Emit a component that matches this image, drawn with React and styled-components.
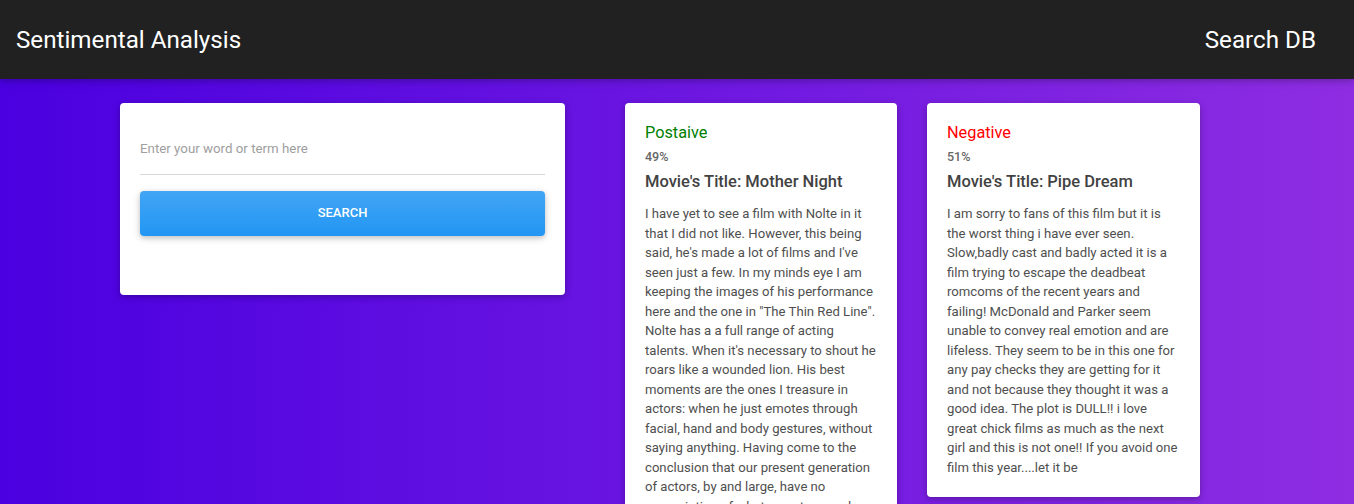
import React, { useState } from "react";
import styled, { createGlobalStyle } from "styled-components";

const GlobalStyle = createGlobalStyle`
  html, body {
    margin: 0;
    padding: 0;
  }
  body {
    font-family: Roboto, "Liberation Sans", sans-serif;
    background: linear-gradient(to right, #4a00e0, #8e2de2);
    min-height: 100vh;
  }
`;

const Page = styled.div`
  min-height: 100vh;
  background: linear-gradient(to right, #4a00e0, #8e2de2);
`;

const NavBar = styled.nav`
  height: 79px;
  background-color: #212121;
  display: flex;
  align-items: center;
  justify-content: space-between;
  padding: 0 38px 0 16px;
  box-sizing: border-box;
  box-shadow: 0 2px 5px 0 rgba(0, 0, 0, 0.16), 0 2px 10px 0 rgba(0, 0, 0, 0.12);
`;

const Brand = styled.span`
  color: #fff;
  font-size: 24.2px;
  font-weight: 400;
`;

const NavLink = styled.a`
  color: #fff;
  font-size: 24.2px;
  text-decoration: none;
  cursor: pointer;
`;

const Main = styled.main`
  display: flex;
  align-items: flex-start;
  padding: 24px 0 0 120px;
`;

const Card = styled.div`
  background: #fff;
  border-radius: 4px;
  box-shadow: 0 2px 5px 0 rgba(0, 0, 0, 0.16), 0 2px 10px 0 rgba(0, 0, 0, 0.12);
  box-sizing: border-box;
  width: ${(p) => p.$width}px;
  margin-left: ${(p) => p.$gap || 0}px;
  padding: 20px;
`;

const SearchCard = styled(Card)`
  height: 192px;
  padding-top: 30px;
`;

const Input = styled.input`
  display: block;
  width: 100%;
  box-sizing: border-box;
  border: none;
  border-bottom: 1px solid #d6d6d6;
  outline: none;
  font-family: Roboto, "Liberation Sans", sans-serif;
  font-size: 13.3px;
  color: #333;
  padding: 6px 0 16px;
  height: 42px;
  &::placeholder {
    color: #9e9e9e;
  }
`;

const SearchButton = styled.button`
  display: block;
  width: 100%;
  height: 45px;
  margin-top: 16px;
  padding: 0 0 2px;
  border: none;
  border-radius: 4px;
  background: linear-gradient(to bottom, #42a5f5, #2196f3);
  color: #fff;
  font-family: Roboto, "Liberation Sans", sans-serif;
  font-size: 13px;
  font-weight: 500;
  text-transform: uppercase;
  cursor: pointer;
  box-shadow: 0 2px 5px 0 rgba(0, 0, 0, 0.16), 0 2px 10px 0 rgba(0, 0, 0, 0.12);
`;

const Verdict = styled.h4`
  margin: 0;
  font-size: 16.3px;
  font-weight: 400;
  line-height: 19px;
  color: ${(p) => (p.$positive ? "#008000" : "#ff0000")};
`;

const Percent = styled.div`
  margin-top: 7px;
  font-size: 12.5px;
  font-weight: 500;
  color: #666;
`;

const MovieTitle = styled.h5`
  margin: 7px 0 0;
  font-size: 16.5px;
  font-weight: 500;
  line-height: 22px;
  color: #424242;
`;

const Review = styled.p`
  margin: 11px 0 0;
  font-size: 13.15px;
  line-height: 19.5px;
  color: #4f4f4f;
`;

const results = [
  {
    positive: true,
    label: "Postaive",
    percent: "49%",
    title: "Mother Night",
    width: 272,
    gap: 60,
    review:
      "I have yet to see a film with Nolte in it that I did not like. However, this being said, he's made a lot of films and I've seen just a few. In my minds eye I am keeping the images of his performance here and the one in \"The Thin Red Line\". Nolte has a a full range of acting talents. When it's necessary to shout he roars like a wounded lion. His best moments are the ones I treasure in actors: when he just emotes through facial, hand and body gestures, without saying anything. Having come to the conclusion that our present generation of actors, by and large, have no appreciation of what an actor can do without words, I find Nolte a refreshing change.",
  },
  {
    positive: false,
    label: "Negative",
    percent: "51%",
    title: "Pipe Dream",
    width: 273,
    gap: 30,
    review:
      "I am sorry to fans of this film but it is the worst thing i have ever seen. Slow,badly cast and badly acted it is a film trying to escape the deadbeat romcoms of the recent years and failing! McDonald and Parker seem unable to convey real emotion and are lifeless. They seem to be in this one for any pay checks they are getting for it and not because they thought it was a good idea. The plot is DULL!! i love great chick films as much as the next girl and this is not one!! If you avoid one film this year....let it be",
  },
];

function App() {
  const [term, setTerm] = useState("");

  return (
    <>
      <GlobalStyle />
      <Page>
        <NavBar>
          <Brand>Sentimental Analysis</Brand>
          <NavLink>Search DB</NavLink>
        </NavBar>
        <Main>
          <SearchCard $width={445}>
            <Input
              placeholder="Enter your word or term here"
              value={term}
              onChange={(e) => setTerm(e.target.value)}
            />
            <SearchButton>Search</SearchButton>
          </SearchCard>
          {results.map((r) => (
            <Card key={r.title} $width={r.width} $gap={r.gap}>
              <Verdict $positive={r.positive}>{r.label}</Verdict>
              <Percent>{r.percent}</Percent>
              <MovieTitle>Movie's Title: {r.title}</MovieTitle>
              <Review>{r.review}</Review>
            </Card>
          ))}
        </Main>
      </Page>
    </>
  );
}

export default App;
